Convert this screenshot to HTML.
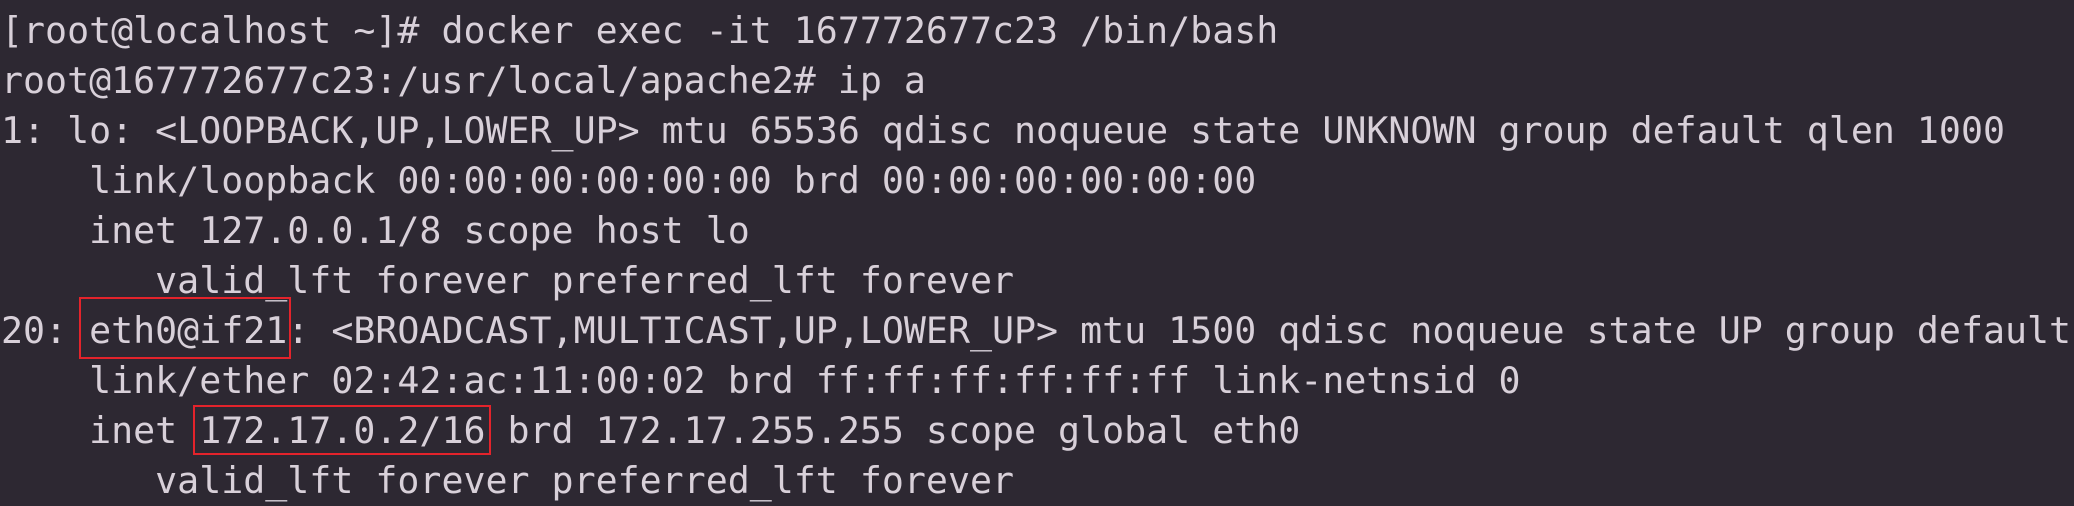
<!DOCTYPE html>
<html><head><meta charset="utf-8"><style>
html,body{margin:0;padding:0;background:#2d2832;width:2074px;height:498px;overflow:hidden}
pre{margin:0;position:absolute;left:1px;top:6px;font-family:"DejaVu Sans Mono","Liberation Mono",monospace;font-size:36.6px;line-height:50px;color:#d8d0d9;white-space:pre}
.b{position:absolute;border:2.5px solid #e3232b;box-sizing:border-box}
</style></head><body>
<pre>[root@localhost ~]# docker exec -it 167772677c23 /bin/bash
root@167772677c23:/usr/local/apache2# ip a
1: lo: &lt;LOOPBACK,UP,LOWER_UP&gt; mtu 65536 qdisc noqueue state UNKNOWN group default qlen 1000
    link/loopback 00:00:00:00:00:00 brd 00:00:00:00:00:00
    inet 127.0.0.1/8 scope host lo
       valid_lft forever preferred_lft forever
20: eth0@if21: &lt;BROADCAST,MULTICAST,UP,LOWER_UP&gt; mtu 1500 qdisc noqueue state UP group default
    link/ether 02:42:ac:11:00:02 brd ff:ff:ff:ff:ff:ff link-netnsid 0
    inet 172.17.0.2/16 brd 172.17.255.255 scope global eth0
       valid_lft forever preferred_lft forever</pre>
<div class="b" style="left:79px;top:297px;width:212px;height:62px"></div>
<div class="b" style="left:193px;top:405px;width:298px;height:50px"></div>
</body></html>
